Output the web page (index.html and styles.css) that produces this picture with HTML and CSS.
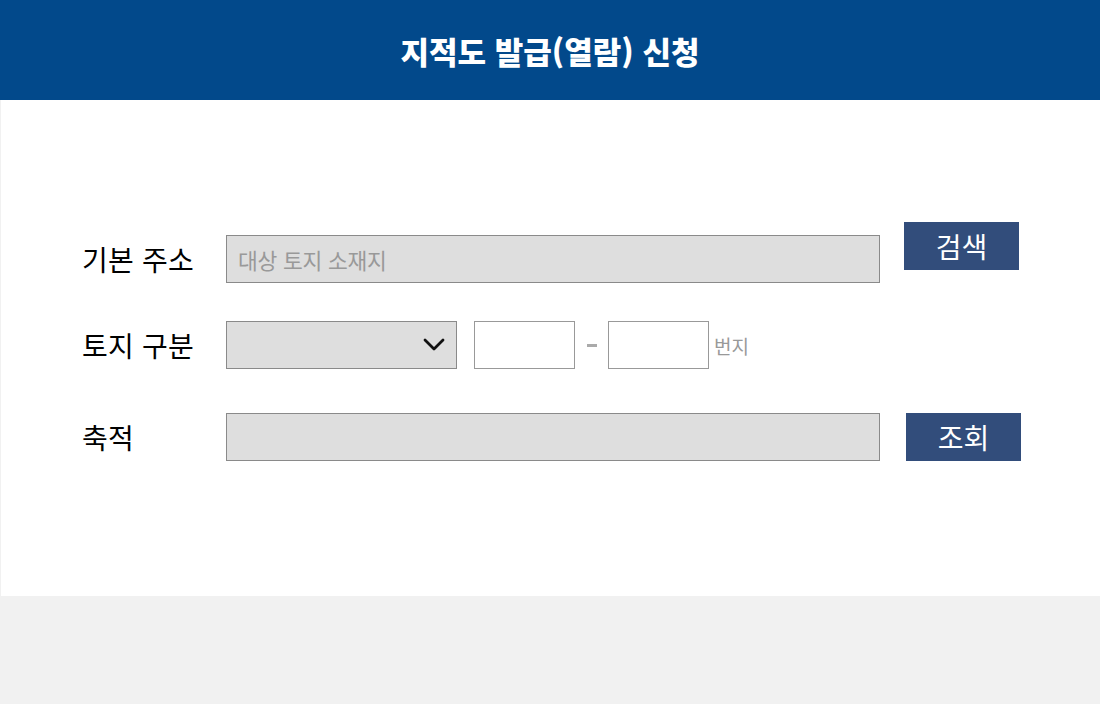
FILE: index.html
```html
<!DOCTYPE html>
<html lang="ko">
<head>
<meta charset="utf-8">
<title>지적도 발급(열람) 신청</title>
<link rel="stylesheet" href="styles.css">
</head>
<body>
<header class="top">
  <h1 class="title">지적도 발급(열람) 신청</h1>
</header>
<main class="panel">
  <div class="row row-1">
    <label class="label">기본 주소</label>
    <div class="field field-wide"><span class="ph">대상 토지 소재지</span></div>
    <button class="btn btn-search">검색</button>
  </div>
  <div class="row row-2">
    <label class="label">토지 구분</label>
    <div class="field field-select">
      <svg class="chev" width="22" height="14" viewBox="0 0 22 14"><path d="M2 2 L11 11 L20 2" fill="none" stroke="#111" stroke-width="2.8" stroke-linecap="round" stroke-linejoin="round"/></svg>
    </div>
    <div class="field field-num"></div>
    <span class="dash"></span>
    <div class="field field-num"></div>
    <span class="unit">번지</span>
  </div>
  <div class="row row-3">
    <label class="label">축적</label>
    <div class="field field-wide"></div>
    <button class="btn btn-view">조회</button>
  </div>
</main>
</body>
</html>
```
FILE: styles.css
```css
html, body {
  margin: 0;
  padding: 0;
  background: #f1f1f1;
  font-family: "Noto Sans CJK KR", "Noto Sans", sans-serif;
}
.top {
  height: 100px;
  background: #02498b;
  display: flex;
  align-items: center;
  justify-content: center;
}
.title {
  margin: 0;
  color: #fff;
  font-size: 31px;
  font-weight: 900;
  letter-spacing: 0;
  line-height: 1;
  padding-top: 1px;
}
.panel {
  margin-left: 1px;
  background: #fff;
  height: 496px;
  box-sizing: border-box;
  padding: 135px 0 0 81px;
}
.row {
  display: flex;
  align-items: center;
  height: 48px;
}
.row-2 { margin-top: 38px; }
.row-3 { margin-top: 44px; }
.label {
  width: 144px;
  font-size: 28px;
  font-weight: 400;
  color: #000;
  letter-spacing: 0.2px;
  line-height: 1;
}
.field {
  box-sizing: border-box;
  height: 48px;
  border: 1px solid #8a8a8a;
  background: #dedede;
  display: flex;
  align-items: center;
}
.field-wide { width: 654px; }
.ph {
  padding-left: 11px;
  font-size: 21.5px;
  color: #999;
  letter-spacing: -0.2px;
}
.field-select {
  width: 231px;
  justify-content: flex-end;
  padding-right: 11px;
}
.field-num {
  width: 101px;
  background: #fff;
  border-color: #999;
}
.row-2 .field-num:nth-of-type(2) { margin-left: 17px; }
.dash {
  width: 33px;
  display: flex;
  justify-content: center;
}
.dash::before {
  content: "";
  width: 10px;
  height: 3px;
  background: #aaa;
}
.unit {
  margin-left: 5px;
  font-size: 19px;
  color: #999;
}
.btn {
  border: 0;
  background: #324d7b;
  color: #fff;
  font-family: "Noto Sans CJK KR", sans-serif;
  font-size: 28px;
  width: 115px;
  height: 48px;
  padding: 0;
  line-height: 1;
}
.btn-search {
  margin-left: 24px;
  align-self: flex-start;
  margin-top: -13px;
}
.btn-view { margin-left: 26px; }
```
